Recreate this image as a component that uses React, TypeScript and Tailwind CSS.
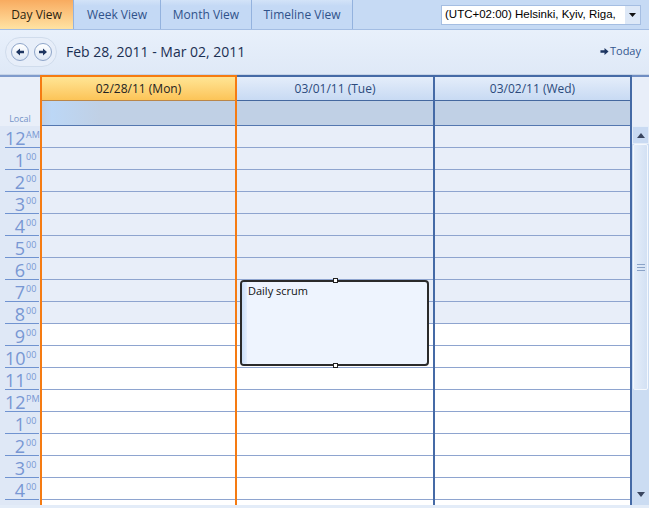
import React from "react";

const tabs = ["Day View", "Week View", "Month View", "Timeline View"];
const tabWidths = ["w-[74px]", "w-[87px]", "w-[91px]", "w-[101px]"];

const days = [
  { label: "02/28/11 (Mon)", today: true },
  { label: "03/01/11 (Tue)", today: false },
  { label: "03/02/11 (Wed)", today: false },
];

const hours: [string, string][] = [
  ["12", "AM"], ["1", "00"], ["2", "00"], ["3", "00"], ["4", "00"], ["5", "00"],
  ["6", "00"], ["7", "00"], ["8", "00"], ["9", "00"], ["10", "00"], ["11", "00"],
  ["12", "PM"], ["1", "00"], ["2", "00"], ["3", "00"], ["4", "00"],
];

function NavCircle({ dir }: { dir: "left" | "right" }) {
  return (
    <div className="w-[18px] h-[18px] rounded-full border border-[#8ea5c9] bg-gradient-to-b from-[#ffffff] to-[#dde7f5] flex items-center justify-center">
      <svg width="10" height="10" viewBox="0 0 10 10">
        {dir === "left" ? (
          <path d="M1 5 L5 1.5 L5 3.8 L9 3.8 L9 6.2 L5 6.2 L5 8.5 Z" fill="#1d3561" />
        ) : (
          <path d="M9 5 L5 1.5 L5 3.8 L1 3.8 L1 6.2 L5 6.2 L5 8.5 Z" fill="#1d3561" />
        )}
      </svg>
    </div>
  );
}

function DayColumn({ label, today, last, children }: { label: string; today: boolean; last: boolean; children?: React.ReactNode }) {
  const border = today
    ? "border-x-2 border-t-2 border-[#f57b12]"
    : "border-r-2 border-t-2 border-[#456aa6]";
  return (
    <div className={`relative flex flex-col ${border} ${today ? "w-[197px]" : last ? "w-[197px]" : "w-[198px]"}`}>
      <div
        className={`h-[24px] flex items-center justify-center text-[12px] border-b ${
          today
            ? "bg-gradient-to-b from-[#ffe594] to-[#fcc457] text-[#222] border-[#b9864a]"
            : "bg-gradient-to-b from-[#e4edfa] to-[#c8daf3] text-[#2b4a7c] border-[#45689f]"
        }`}
      >
        {label}
      </div>
      <div
        className={`h-[25px] border-b border-[#5477b0] ${
          today ? "bg-gradient-to-r from-[#c0d0e5] via-[#bcd7f6] via-5% to-[#c0d0e5] to-30%" : "bg-[#c0d0e5]"
        }`}
      />
      <div className="flex-1 overflow-hidden">
        {hours.map((h, i) => (
          <div
            key={i}
            className={`h-[22px] border-b border-[#8ea4cf] ${i < 9 ? "bg-[#e8eef9]" : "bg-white"}`}
          />
        ))}
        <div className="h-[22px] bg-white" />
      </div>
      {children}
    </div>
  );
}

export default function App() {
  return (
    <div className="w-[649px] h-[508px] overflow-hidden bg-[#e3ecf8] flex flex-col font-['Open_Sans',sans-serif] text-[#222]">
      {/* Tabs */}
      <div className="h-[30px] flex bg-[#c6daf4] border-b border-[#a3bde3]">
        {tabs.map((t, i) => (
          <div
            key={t}
            className={`${tabWidths[i]} h-full flex items-center justify-center text-[12px] border-r border-[#93b2de] ${
              i === 0
                ? "bg-gradient-to-b from-[#f8ab5f] to-[#ffe3a3] text-[#2c2410]"
                : "bg-gradient-to-b from-[#d3e3f8] via-[#c4d9f5] via-20% to-[#c4d9f5] text-[#30528a]"
            }`}
          >
            {t}
          </div>
        ))}
        <div className="flex-1 flex items-start justify-end pr-[8px] pt-[5px]">
          <div className="w-[200px] h-[20px] bg-white border border-[#a5bee2] flex items-center">
            <span className="flex-1 pl-[3px] text-[11.5px] text-black font-['Liberation_Sans',sans-serif] whitespace-nowrap overflow-hidden">
              (UTC+02:00) Helsinki, Kyiv, Riga,
            </span>
            <div className="w-[15px] h-full bg-[#dde8f7] flex items-center justify-center">
              <svg width="7" height="4" viewBox="0 0 7 4">
                <path d="M0 0 H7 L3.5 4 Z" fill="#111" />
              </svg>
            </div>
          </div>
        </div>
      </div>

      {/* Toolbar */}
      <div className="h-[45px] flex items-center bg-gradient-to-b from-[#e8f0fb] to-[#dfe9f7] border-b border-[#c6d4e8]">
        <div className="ml-[5px] w-[52px] h-[30px] rounded-full border border-[#d0dcec] bg-[#e7eef9] flex items-center justify-center gap-[5px]">
          <NavCircle dir="left" />
          <NavCircle dir="right" />
        </div>
        <span className="ml-[9px] mb-[2px] text-[14px] text-[#1b2f52]">Feb 28, 2011 - Mar 02, 2011</span>
        <div className="ml-auto mr-[8px] mb-[2px] flex items-center text-[11px] text-[#34578f]">
          <svg width="9" height="9" viewBox="0 0 10 10" className="mr-[1px]">
            <path d="M9.5 5 L5 1 L5 3.6 L0.5 3.6 L0.5 6.4 L5 6.4 L5 9 Z" fill="#1d3561" />
          </svg>
          Today
        </div>
      </div>

      {/* Grid */}
      <div className="flex h-[430px]">
        {/* time column */}
        <div className="w-[40px] flex flex-col border-t-2 border-[#7f9bcc]">
          <div className="h-[49px] bg-[#e9eff9] flex items-end justify-center pb-[1px]">
            <span className="text-[9px] text-[#7594c8]">Local</span>
          </div>
          <div className="flex-1 overflow-hidden bg-[#dfe8f6]">
            {hours.map(([n, s], i) => (
              <div key={i} className="h-[22px] pl-[5px] pr-[1px] flex">
                <div className="flex-1 border-b border-[#7093d0] flex items-end text-[#7897d3]">
                  <span className="w-[20px] text-right text-[18px] leading-none">{n}</span>
                  <span className="self-start mt-[4px] ml-[1px] text-[9px] leading-none">{s}</span>
                </div>
              </div>
            ))}
          </div>
        </div>

        {days.map((d, i) => (
          <DayColumn key={d.label} label={d.label} today={d.today} last={i === 2}>
            {i === 1 && (
              <div className="absolute left-[3px] top-[203px] w-[189px] h-[86px] rounded-[4px] border-2 border-[#2a2a2a] bg-[#eef4fe] overflow-visible">
                <div className="absolute left-0 top-0 bottom-0 w-[5px] rounded-l-[2px] bg-gradient-to-r from-[#c9ddf7] to-[#e3edfc]" />
                <div className="relative pl-[6px] pt-[1px] text-[11px] text-[#111]">Daily scrum</div>
                <div className="absolute left-[91px] top-[-4px] w-[5px] h-[5px] bg-white border border-[#222]" />
                <div className="absolute left-[91px] bottom-[-4px] w-[5px] h-[5px] bg-white border border-[#222]" />
              </div>
            )}
          </DayColumn>
        ))}

        {/* scrollbar */}
        <div className="flex-1 flex flex-col border-t-2 border-[#6f8dc2]">
          <div className="h-[49px] bg-[#e8eef9]" />
          <div className="flex-1 bg-[#cbdcf2] flex flex-col">
            <div className="h-[18px] bg-[#c9daf2] border border-[#e4edf9] flex items-center justify-center">
              <svg width="8" height="5" viewBox="0 0 8 5">
                <path d="M0 5 H8 L4 0 Z" fill="#3a4660" />
              </svg>
            </div>
            <div className="mx-[1px] h-[246px] rounded-[2px] border border-[#f4f8fd] bg-gradient-to-r from-[#e4edf9] to-[#d3e1f4] flex items-center justify-center">
              <div className="flex flex-col gap-[2px]">
                <div className="w-[8px] h-[1px] bg-[#8aa3c8]" />
                <div className="w-[8px] h-[1px] bg-[#8aa3c8]" />
                <div className="w-[8px] h-[1px] bg-[#8aa3c8]" />
              </div>
            </div>
            <div className="flex-1 flex items-end justify-center pb-[8px]">
              <svg width="8" height="5" viewBox="0 0 8 5">
                <path d="M0 0 H8 L4 5 Z" fill="#3a4660" />
              </svg>
            </div>
          </div>
        </div>
      </div>
      <div className="flex-1 bg-[#e3ecf8]" />
    </div>
  );
}
